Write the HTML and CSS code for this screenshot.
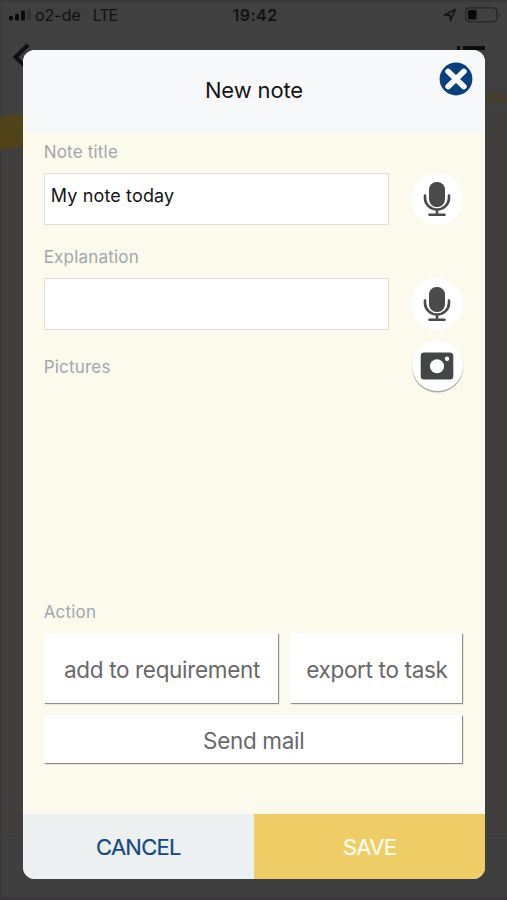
FILE: index.html
```
<!DOCTYPE html>
<html lang="en">
<head>
<meta charset="utf-8">
<title>New note</title>
<link rel="stylesheet" href="styles.css">
</head>
<body>
<div class="screen">
  <svg class="backdrop" viewBox="0 0 507 900" aria-hidden="true">
    <rect width="507" height="900" fill="#403f3d"/>
    <rect width="507" height="118" fill="#404040"/>
    <rect y="837" width="507" height="63" fill="#3f3f3f"/>
    <rect y="836" width="507" height="1" fill="#393937"/>
    <rect width="507" height="2" fill="#383838"/>
    <rect width="2" height="900" fill="#3b3b3b"/>
    <rect y="897" width="507" height="3" fill="#3b383b"/>
    <path d="M0 117L30 112V145L0 150Z" fill="#51431a"/>
    <path d="M480 93H507V104H480Z" fill="#453f30"/>
    <path d="M28 45L15.500 57L28 69" fill="none" stroke="#0b1019" stroke-width="4"/>
    <path d="M457 48H460M463 48H485" stroke="#0c0d10" stroke-width="4"/>
  </svg>
  <header class="status">
    <div class="carrier">
      <svg width="22" height="12" viewBox="0 0 22 12" aria-hidden="true">
        <g fill="#0b0b0b"><rect y="7" width="4" height="4.500" rx="1"/><rect x="6" y="5" width="4" height="6.500" rx="1"/><rect x="12" y="1.500" width="4" height="10" rx="1"/></g>
        <rect x="18" width="4" height="11.500" rx="1" fill="#343434"/>
      </svg>
      <span class="operator">o2-de</span><span class="network">LTE</span>
    </div>
    <span class="time">19:42</span>
    <div class="indicators">
      <svg width="14" height="14" viewBox="0 0 14 14" aria-hidden="true"><path d="M1.500 7L12.300 1.500L7.500 12.500L6.900 7.200Z" fill="none" stroke="#151515" stroke-width="1.700" stroke-linejoin="round"/></svg>
      <svg width="36" height="16" viewBox="0 0 36 16" aria-hidden="true"><rect x=".8" y=".8" width="31" height="14" rx="3.500" fill="none" stroke="#242424" stroke-width="1.200"/><rect x="3" y="3" width="8.500" height="9.500" rx="1.500" fill="#080808"/><path d="M34 5.500Q36 8 34 10.500Z" fill="#222"/></svg>
    </div>
  </header>

  <main class="dialog">
    <div class="dialog-head">
      <h1 class="title">New note</h1>
      <button class="close" aria-label="Close">
        <svg width="34" height="34" viewBox="0 0 34 34"><circle cx="17" cy="17" r="16.400" fill="#08407b"/><path d="M9.200 9.500L24.800 24.500M24.800 9.500L9.200 24.500" stroke="#fff" stroke-width="5.800" stroke-linecap="round"/></svg>
      </button>
    </div>
    <div class="dialog-body">
      <div class="label">Note title</div>
      <div class="row">
        <div class="field">My note today</div>
        <button class="round mic" aria-label="Dictate title">
          <svg width="28" height="36" viewBox="0 0 28 36"><rect x="6" y="1" width="16" height="25" rx="7.500" fill="#4a4a4a"/><path d="M2 14.500V17a12 11.500 0 0 0 24 0V14.500M14 28.500V33.500M6.500 33.700H21.500" fill="none" stroke="#4a4a4a" stroke-width="2.600" stroke-linecap="round"/></svg>
        </button>
      </div>
      <div class="label second">Explanation</div>
      <div class="row second-row">
        <div class="field"></div>
        <button class="round mic" aria-label="Dictate explanation">
          <svg width="28" height="36" viewBox="0 0 28 36"><rect x="6" y="1" width="16" height="25" rx="7.500" fill="#4a4a4a"/><path d="M2 14.500V17a12 11.500 0 0 0 24 0V14.500M14 28.500V33.500M6.500 33.700H21.500" fill="none" stroke="#4a4a4a" stroke-width="2.600" stroke-linecap="round"/></svg>
        </button>
      </div>
      <div class="pictures">
        <div class="label">Pictures</div>
        <button class="round camera" aria-label="Add picture">
          <svg width="34" height="28" viewBox="0 0 34 28"><rect x=".7" y=".5" width="32.600" height="27" rx="3.500" fill="#444546"/><circle cx="17" cy="14.300" r="7" fill="#fff"/><circle cx="27" cy="6.700" r="2.200" fill="#fff"/></svg>
        </button>
      </div>
      <div class="label">Action</div>
      <div class="actions">
        <button class="action-btn">add to requirement</button>
        <button class="action-btn">export to task</button>
        <button class="action-btn wide">Send mail</button>
      </div>
    </div>
    <footer class="dialog-foot">
      <button class="cancel">CANCEL</button>
      <button class="save">SAVE</button>
    </footer>
  </main>
</div>
</body>
</html>
```
FILE: styles.css
```
* { box-sizing: border-box; }
body { margin: 0; font-family: Inter, "Liberation Sans", sans-serif; }
button { font: inherit; border: 0; margin: 0; padding: 0; background: none; }
svg { display: block; }
.screen { position: relative; width: 507px; height: 900px; overflow: hidden; background: #403f3d; }
.backdrop { position: absolute; inset: 0; width: 507px; height: 900px; }
.status { position: relative; display: grid; grid-template-columns: 1fr auto 1fr; align-items: center; height: 30px; padding: 0 6px 0 9px; font-size: 16px; line-height: 20px; color: #111; }
.carrier { display: flex; align-items: center; gap: 4px; }
.network { margin-left: 8px; letter-spacing: -1.1px; }
.time { font-weight: 600; letter-spacing: 0.5px; }
.indicators { display: flex; justify-content: flex-end; align-items: center; gap: 8px; }
.dialog { position: relative; display: flex; flex-direction: column; width: 462.500px; height: 829px; margin: 19.500px 0 0 22.700px; border-radius: 12px; overflow: hidden; background: #fcfaed; }
.dialog-head { position: relative; height: 82px; display: flex; align-items: center; justify-content: center; background: #f7f8fa; }
.title { margin: 0 0 2px; font-size: 22px; font-weight: 400; line-height: 28px; letter-spacing: -0.15px; color: #151515; }
.close { position: absolute; top: 12.500px; right: 12.300px; }
.dialog-body { flex: 1; padding: 10px 22px 0 21px; }
.label { height: 20px; line-height: 20px; font-size: 17px; letter-spacing: 0.2px; color: #a2a7ad; white-space: nowrap; }
.row { display: flex; align-items: center; justify-content: space-between; height: 52px; margin-top: 11.500px; }
.second-row { margin-top: 10.500px; }
.field { width: 345px; height: 52px; padding: 10px 6px; border: 1px solid #deddd9; background: #fff; font-size: 18px; line-height: 24px; letter-spacing: 0.15px; color: #151515; }
.round { display: flex; align-items: center; justify-content: center; width: 52px; height: 52px; border-radius: 50%; background: #fff; flex: none; }
.second { margin-top: 22px; }
.pictures { display: flex; justify-content: space-between; height: 272px; padding-top: 11px; }
.pictures .label { margin-top: 16px; }
.camera { height: 50px; width: 51px; margin-right: 0.500px; box-shadow: 0 1.500px 1px #a6a69f; }
.actions { display: grid; grid-template-columns: 234.500px 171.500px; grid-template-rows: 70px 48px; gap: 12px; margin-top: 11px; }
.action-btn { padding: 4px 0 0 2px; background: #fff; box-shadow: 1px 1px 1px #8e8e89; font-size: 22.500px; line-height: 28px; letter-spacing: -0.33px; color: #68686a; white-space: nowrap; }
.wide { grid-column: span 2; }
.dialog-foot { display: flex; height: 65px; }
.dialog-foot button { width: 50%; padding-top: 2px; font-size: 22px; line-height: 28px; letter-spacing: -0.75px; -webkit-text-stroke: 0.2px; }
.cancel { background: #edf0f1; color: #164a83; }
.save { background: #efcd66; color: #fffdf0; }
```
